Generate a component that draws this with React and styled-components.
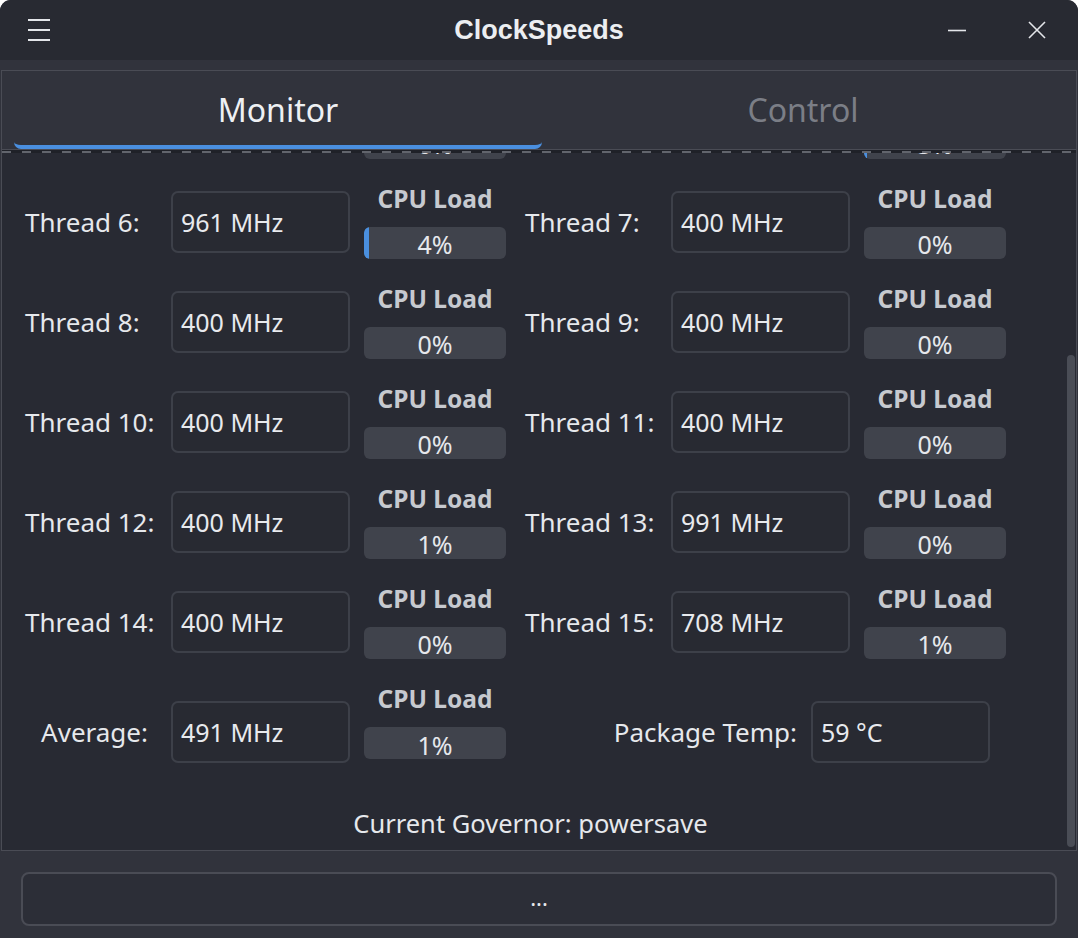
import React, { useLayoutEffect, useRef, useState } from 'react';
import styled, { createGlobalStyle } from 'styled-components';

const GlobalStyle = createGlobalStyle`
  html, body {
    margin: 0;
    padding: 0;
    background: #ffffff;
  }
  * { box-sizing: border-box; }
`;

const Window = styled.div`
  width: 1078px;
  height: 938px;
  background: #31333c;
  border-radius: 11px 11px 0 0;
  overflow: hidden;
  display: flex;
  flex-direction: column;
  font-family: "Noto Sans", "DejaVu Sans", sans-serif;
  color: #e6e8ec;
`;

const Header = styled.div`
  height: 60px;
  flex: none;
  background: #282a32;
  display: grid;
  grid-template-columns: 1fr auto 1fr;
  align-items: center;
`;

const HeaderLeft = styled.div`
  padding-left: 28px;
  display: flex;
  align-items: center;
`;

const HeaderRight = styled.div`
  display: flex;
  justify-content: flex-end;
  align-items: center;
  gap: 62px;
  padding-right: 32px;
`;

const Title = styled.h1`
  margin: 0;
  font-family: "Liberation Sans", Arial, sans-serif;
  font-weight: bold;
  font-size: 27px;
  color: #eceef1;
`;

const Body = styled.div`
  flex: 1;
  display: flex;
  flex-direction: column;
  padding-top: 10px;
`;

const Frame = styled.div`
  margin: 0 1px;
  height: 781px;
  border: 1px solid #4a4c55;
  display: flex;
  flex-direction: column;
  background: #282a33;
`;

const TabBar = styled.div`
  height: 79px;
  flex: none;
  background: #31333c;
  border-bottom: 1px solid #4a4c55;
  display: grid;
  grid-template-columns: 528px 1fr;
  padding: 0 12px;
`;

const Tab = styled.div`
  display: flex;
  align-items: center;
  justify-content: center;
  padding-top: 2px;
  font-size: 32px;
  color: ${p => (p.$active ? '#eef0f3' : '#7b7e86')};
  border-bottom: 4px solid ${p => (p.$active ? '#4a8fdf' : 'transparent')};
  border-radius: 0 0 7px 7px;
`;

const DashLine = styled.div`
  height: 3px;
  flex: none;
  background:
    repeating-linear-gradient(to right, #62656d 0 9px, transparent 9px 20px) 0 1px / 100% 2px no-repeat,
    #1f2128;
`;

const ScrollArea = styled.div`
  flex: 1;
  min-height: 0;
  position: relative;
  display: flex;
`;

const Viewport = styled.div`
  flex: 1;
  overflow: hidden;
`;

const ScrollThumb = styled.div`
  position: absolute;
  right: 1px;
  width: 8px;
  border-radius: 4px;
  background: #4a4d56;
`;

const Content = styled.div`
  padding: 10px 0 12px 23px;
`;

const Row = styled.div`
  height: ${p => p.$height || 100}px;
  display: flex;
  align-items: center;
`;

const Half = styled.div`
  width: 500px;
  display: grid;
  grid-template-columns: ${p => p.$cols || '132px 179px 142px'};
  column-gap: 14px;
  align-items: center;
`;

const Label = styled.div`
  font-size: 26px;
  white-space: nowrap;
  text-align: ${p => (p.$right ? 'right' : 'left')};
  padding-right: ${p => p.$pad || 0}px;
`;

const ValueBox = styled.div`
  height: 62px;
  border: 2px solid #3d4049;
  border-radius: 7px;
  background: #282a32;
  display: flex;
  align-items: center;
  padding-left: 8px;
  font-size: 25px;
  color: #e8eaee;
`;

const LoadColumn = styled.div`
  display: flex;
  flex-direction: column;
  align-items: stretch;
  margin-bottom: ${p => p.$lift || 0}px;
`;

const LoadTitle = styled.div`
  font-size: 24.5px;
  font-weight: bold;
  line-height: 26px;
  text-align: center;
  color: #c6c9cf;
  margin-bottom: 15px;
  white-space: nowrap;
`;

const Bar = styled.div`
  position: relative;
  height: 32px;
  border-radius: 6px;
  background: #40434c;
  overflow: hidden;
  display: flex;
  align-items: center;
  justify-content: center;
`;

const BarFill = styled.div`
  position: absolute;
  left: 0;
  top: 0;
  bottom: 0;
  background: #4a8fdf;
  border-radius: 6px 0 0 6px;
`;

const BarText = styled.span`
  position: relative;
  font-size: 25px;
  color: #e6e8ec;
  margin-top: 3px;
`;

const Governor = styled.div`
  margin-top: 16px;
  line-height: 30px;
  font-size: 25.5px;
  text-align: center;
  padding-right: 40px;
`;

const Footer = styled.div`
  flex: 1;
  padding: 21px 21px 11px 21px;
`;

const FooterButton = styled.div`
  height: 54px;
  border: 2px solid #4a4c55;
  border-radius: 8px;
  background: #2c2e37;
  display: flex;
  align-items: center;
  justify-content: center;
  font-size: 22px;
  color: #e6e8ec;
  padding-bottom: 4px;
`;

const threads = [
  { mhz: 400, load: 0 }, { mhz: 400, load: 0 },
  { mhz: 400, load: 0 }, { mhz: 400, load: 0 },
  { mhz: 400, load: 0 }, { mhz: 400, load: 3 },
  { mhz: 961, load: 4 }, { mhz: 400, load: 0 },
  { mhz: 400, load: 0 }, { mhz: 400, load: 0 },
  { mhz: 400, load: 0 }, { mhz: 400, load: 0 },
  { mhz: 400, load: 1 }, { mhz: 991, load: 0 },
  { mhz: 400, load: 0 }, { mhz: 708, load: 1 },
];

const LoadBar = ({ value, lift }) => (
  <LoadColumn $lift={lift}>
    <LoadTitle>CPU Load</LoadTitle>
    <Bar>
      {value > 1 && <BarFill style={{ width: `${value * 0.8}%` }} />}
      <BarText>{value}%</BarText>
    </Bar>
  </LoadColumn>
);

const ThreadCell = ({ index, mhz, load }) => (
  <Half>
    <Label>Thread {index}:</Label>
    <ValueBox>{mhz} MHz</ValueBox>
    <LoadBar value={load} />
  </Half>
);

const MenuIcon = () => (
  <svg width="22" height="22" viewBox="0 0 22 22" fill="none" stroke="#e4e6ea" strokeWidth="1.8">
    <path d="M0 1h22M0 11h22M0 21h22" />
  </svg>
);

const MinimizeIcon = () => (
  <svg width="18" height="18" viewBox="0 0 18 18" fill="none" stroke="#e4e6ea" strokeWidth="1.6">
    <path d="M0 9.5h18" />
  </svg>
);

const CloseIcon = () => (
  <svg width="18" height="18" viewBox="0 0 18 18" fill="none" stroke="#e4e6ea" strokeWidth="1.6">
    <path d="M1 1l16 16M17 1L1 17" />
  </svg>
);

export default function App() {
  const viewRef = useRef(null);
  const [thumb, setThumb] = useState(null);

  useLayoutEffect(() => {
    const el = viewRef.current;
    if (!el) return;
    el.scrollTop = el.scrollHeight;
    const margin = 3;
    const track = el.clientHeight - margin * 2;
    const height = (track * el.clientHeight) / el.scrollHeight + 5;
    setThumb({
      top: el.clientHeight - margin - height,
      height,
    });
  }, []);

  const rows = [];
  for (let i = 0; i < threads.length; i += 2) {
    rows.push(
      <Row key={i}>
        <ThreadCell index={i} {...threads[i]} />
        <ThreadCell index={i + 1} {...threads[i + 1]} />
      </Row>
    );
  }

  return (
    <Window>
      <GlobalStyle />
      <Header>
        <HeaderLeft><MenuIcon /></HeaderLeft>
        <Title>ClockSpeeds</Title>
        <HeaderRight>
          <MinimizeIcon />
          <CloseIcon />
        </HeaderRight>
      </Header>
      <Body>
        <Frame>
          <TabBar>
            <Tab $active>Monitor</Tab>
            <Tab>Control</Tab>
          </TabBar>
          <DashLine />
          <ScrollArea>
            <Viewport ref={viewRef}>
              <Content>
                {rows}
                <Row $height={120}>
                  <Half>
                    <Label $right $pad={9}>Average:</Label>
                    <ValueBox>491 MHz</ValueBox>
                    <LoadBar value={1} lift={19} />
                  </Half>
                  <Half $cols="272px 179px">
                    <Label $right>Package Temp:</Label>
                    <ValueBox>59 °C</ValueBox>
                  </Half>
                </Row>
                <Governor>Current Governor: powersave</Governor>
              </Content>
            </Viewport>
            {thumb && <ScrollThumb style={{ top: thumb.top, height: thumb.height }} />}
          </ScrollArea>
        </Frame>
        <Footer>
          <FooterButton>...</FooterButton>
        </Footer>
      </Body>
    </Window>
  );
}
